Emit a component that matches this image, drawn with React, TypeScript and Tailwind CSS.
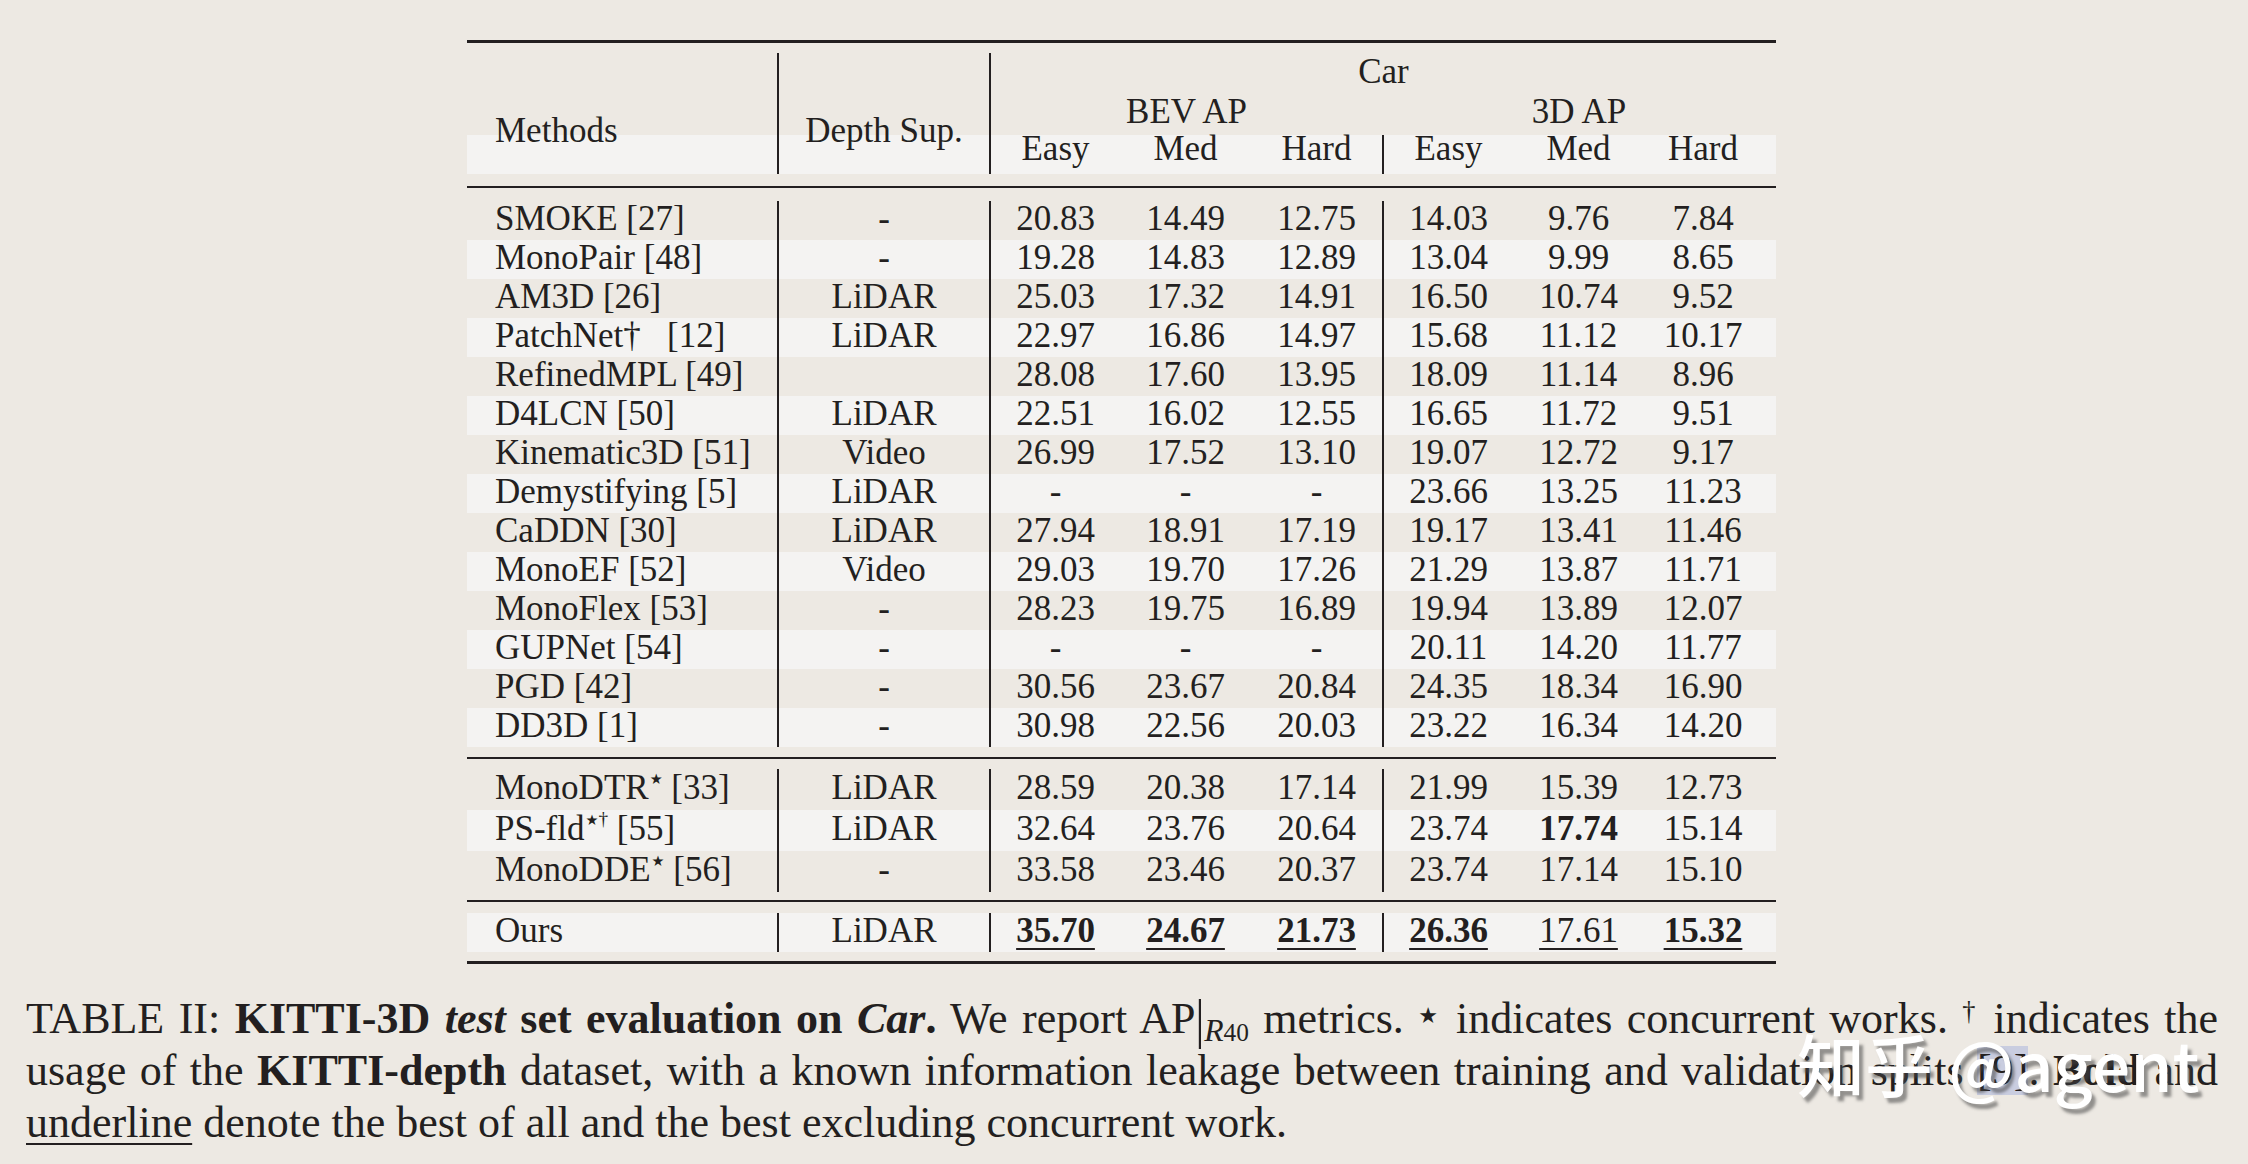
import React from "react";
import clsx from "clsx";

type Val = string | { t: string; b?: boolean; u?: boolean };
type Row = { name: React.ReactNode; depth: string; vals: Val[] };

const cols = "grid grid-cols-[310px_212px_131px_131px_131px_131px_131px_132px]";
const line = "border-l-2 border-[#231f20]";

function Star({ dagger }: { dagger?: boolean }) {
  return (
    <span className="relative -top-[0.55em] ml-[1px] text-[0.55em] leading-none">
      <span className="font-['DejaVu_Sans',sans-serif] text-[0.75em]">★</span>
      {dagger && "†"}
    </span>
  );
}

const baseline: Row[] = [
  { name: "SMOKE [27]", depth: "-", vals: ["20.83", "14.49", "12.75", "14.03", "9.76", "7.84"] },
  { name: "MonoPair [48]", depth: "-", vals: ["19.28", "14.83", "12.89", "13.04", "9.99", "8.65"] },
  { name: "AM3D [26]", depth: "LiDAR", vals: ["25.03", "17.32", "14.91", "16.50", "10.74", "9.52"] },
  { name: "PatchNet†\u00a0\u00a0 [12]", depth: "LiDAR", vals: ["22.97", "16.86", "14.97", "15.68", "11.12", "10.17"] },
  { name: "RefinedMPL [49]", depth: "", vals: ["28.08", "17.60", "13.95", "18.09", "11.14", "8.96"] },
  { name: "D4LCN [50]", depth: "LiDAR", vals: ["22.51", "16.02", "12.55", "16.65", "11.72", "9.51"] },
  { name: "Kinematic3D [51]", depth: "Video", vals: ["26.99", "17.52", "13.10", "19.07", "12.72", "9.17"] },
  { name: "Demystifying [5]", depth: "LiDAR", vals: ["-", "-", "-", "23.66", "13.25", "11.23"] },
  { name: "CaDDN [30]", depth: "LiDAR", vals: ["27.94", "18.91", "17.19", "19.17", "13.41", "11.46"] },
  { name: "MonoEF [52]", depth: "Video", vals: ["29.03", "19.70", "17.26", "21.29", "13.87", "11.71"] },
  { name: "MonoFlex [53]", depth: "-", vals: ["28.23", "19.75", "16.89", "19.94", "13.89", "12.07"] },
  { name: "GUPNet [54]", depth: "-", vals: ["-", "-", "-", "20.11", "14.20", "11.77"] },
  { name: "PGD [42]", depth: "-", vals: ["30.56", "23.67", "20.84", "24.35", "18.34", "16.90"] },
  { name: "DD3D [1]", depth: "-", vals: ["30.98", "22.56", "20.03", "23.22", "16.34", "14.20"] },
];

const concurrent: Row[] = [
  { name: <>MonoDTR<Star />{"\u00a0"}[33]</>, depth: "LiDAR", vals: ["28.59", "20.38", "17.14", "21.99", "15.39", "12.73"] },
  {
    name: <>PS-fld<Star dagger />{"\u00a0"}[55]</>,
    depth: "LiDAR",
    vals: ["32.64", "23.76", "20.64", "23.74", { t: "17.74", b: true }, "15.14"],
  },
  { name: <>MonoDDE<Star />{"\u00a0"}[56]</>, depth: "-", vals: ["33.58", "23.46", "20.37", "23.74", "17.14", "15.10"] },
];

const ours: Row = {
  name: "Ours",
  depth: "LiDAR",
  vals: [
    { t: "35.70", b: true, u: true },
    { t: "24.67", b: true, u: true },
    { t: "21.73", b: true, u: true },
    { t: "26.36", b: true, u: true },
    { t: "17.61", u: true },
    { t: "15.32", b: true, u: true },
  ],
};

function TableRow({ row, stripe, tall }: { row: Row; stripe?: boolean; tall?: boolean }) {
  return (
    <div className={clsx(cols, "leading-[30px]", tall ? "h-[41px]" : "h-[39px]", stripe && "bg-[#f4f3f2]")}>
      <div className="flex items-center whitespace-nowrap pb-[3px] pl-[28px]">{row.name}</div>
      <div className={clsx("flex items-center justify-center pb-[3px]", line)}>{row.depth}</div>
      {row.vals.map((v, i) => {
        const c = typeof v === "string" ? { t: v } : v;
        return (
          <div
            key={i}
            className={clsx(
              "flex items-center justify-center pb-[3px]",
              (i === 0 || i === 3) && line,
              i === 5 && "pr-[14px]"
            )}
          >
            <span
              className={clsx(
                c.b && "font-bold",
                c.u && "underline decoration-[1.5px] underline-offset-[6px]"
              )}
            >
              {c.t}
            </span>
          </div>
        );
      })}
    </div>
  );
}

function Header() {
  return (
    <div className={clsx(cols, "grid-rows-[39px_43px_39px] border-b-2 border-[#231f20] pt-[10px] pb-[12px]")}>
      <div className="col-span-full col-start-1 row-start-3 bg-[#f4f3f2]" />
      <div className="col-start-1 row-span-3 row-start-1 flex items-center pl-[28px] pt-[36px]">Methods</div>
      <div className={clsx("col-start-2 row-span-3 row-start-1 flex items-center justify-center pt-[36px]", line)}>
        Depth Sup.
      </div>
      <div className={clsx("col-span-6 col-start-3 row-start-1 flex items-center justify-center", line)}>Car</div>
      <div className={clsx("col-span-3 col-start-3 row-start-2 text-center leading-[39px]", line)}>BEV AP</div>
      <div className="col-span-3 col-start-6 row-start-2 text-center leading-[39px]">3D AP</div>
      {["Easy", "Med", "Hard", "Easy", "Med", "Hard"].map((h, i) => (
        <div
          key={i}
          className={clsx(
            "row-start-3 text-center leading-[27px]",
            (i === 0 || i === 3) && line,
            i === 5 && "pr-[14px]"
          )}
          style={{ gridColumnStart: i + 3 }}
        >
          {h}
        </div>
      ))}
    </div>
  );
}

export default function App() {
  return (
    <div className="min-h-screen w-[2248px] bg-[#ede9e3] pt-[40px] font-['Liberation_Serif','Times_New_Roman','DejaVu_Serif',serif] text-[#231f20]">
      <div className="ml-[467px] w-[1309px] border-t-[3px] border-[#231f20] text-[35px]">
        <Header />
        <div className="border-b-2 border-[#231f20] pt-[13px] pb-[10px]">
          {baseline.map((r, i) => (
            <TableRow key={i} row={r} stripe={i % 2 === 1} />
          ))}
        </div>
        <div className="border-b-2 border-[#231f20] pt-[10px] pb-[8px]">
          {concurrent.map((r, i) => (
            <TableRow key={i} row={r} stripe={i % 2 === 1} tall />
          ))}
        </div>
        <div className="border-b-[3px] border-[#231f20] pt-[11px] pb-[9px]">
          <TableRow row={ours} stripe />
        </div>
      </div>

      <div className="relative ml-[26px] mt-[29px] w-[2192px] text-[44px] leading-[52px]">
        <div className="text-justify [text-align-last:justify]">
          TABLE II: <b>KITTI-3D <i>test</i> set evaluation on <i>Car</i>.</b> We report AP
          <span className="inline-block scale-y-125 font-light">|</span>
          <sub className="text-[0.72em] italic">
            R<span className="not-italic text-[0.8em]">40</span>
          </sub>{" "}
          metrics.{" "}
          <span className="relative -top-[0.45em] font-['DejaVu_Sans',sans-serif] text-[0.5em] leading-none">★</span>{" "}
          indicates concurrent works. <sup className="text-[0.6em]">†</sup> indicates the
        </div>
        <div className="text-justify [text-align-last:justify]">
          usage of the <b>KITTI-depth</b> dataset, with a known information leakage between training and validation
          splits <span className="bg-[#c9cde0]">[9]</span>. <b>Bold</b> and
        </div>
        <div>
          <span className="underline decoration-[1.5px] underline-offset-[6px]">underline</span> denote the best of
          all and the best excluding concurrent work.
        </div>

        <div className="absolute left-[1771px] top-[36px] whitespace-nowrap font-['Noto_Sans_CJK_SC',sans-serif] text-[68px] font-medium leading-none text-white [text-shadow:4px_5px_3px_rgba(70,70,70,0.55)]">
          知乎 @agent
        </div>
      </div>
    </div>
  );
}
